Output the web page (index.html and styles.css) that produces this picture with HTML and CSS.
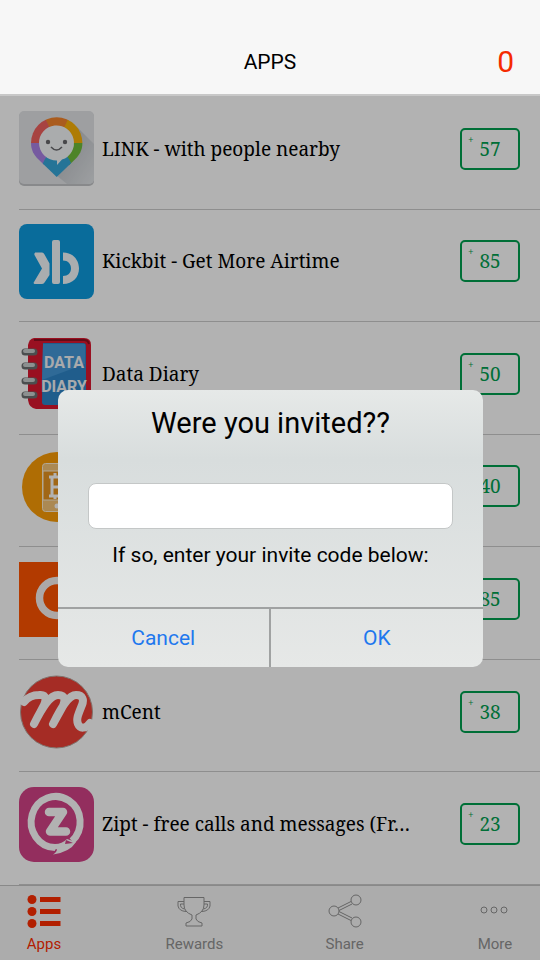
FILE: index.html
```html
<!DOCTYPE html>
<html lang="en">
<head>
  <title>Apps</title>
  <meta charset="utf-8">
  <meta name="viewport" content="width=device-width, initial-scale=1.0">
  <link rel="stylesheet" href="styles.css">
</head>
<body>
  <header class="header">
    <h1>APPS</h1>
    <span class="balance">0</span>
  </header>

  <div class="screen">
    <ul class="app-list">
      <li class="app">
        <svg class="app-icon" viewBox="0 0 75 75">
          <defs>
            <clipPath id="pin"><path d="M12 32a25.700 25.700 0 0 1 51.400 0c0 7-3 12-7 16L37.700 66 19 48c-4-4-7-9-7-16z"/></clipPath>
            <linearGradient id="tile-shadow" x1="0" y1="0" x2="1" y2="1">
              <stop offset="0" stop-color="#b4b8bd"/><stop offset="1" stop-color="#e2e5e8"/>
            </linearGradient>
          </defs>
          <rect y="1" width="75" height="74" rx="5" fill="#c3c5c8"/>
          <rect width="75" height="73" rx="5" fill="#e2e4e7"/>
          <path d="M57 15L75 33V68a5 5 0 0 1-5 5H48L37 64z" fill="url(#tile-shadow)"/>
          <g clip-path="url(#pin)">
            <path d="M38 32L24 5H52z" fill="#f4842c"/>
            <path d="M38 32L51 4H70V32z" fill="#f9b208"/>
            <path d="M38 32H70V50L60 80 48 49z" fill="#6fbe3a"/>
            <path d="M38 32L5 32V50L16 80 27 49z" fill="#a982e6"/>
            <path d="M38 32L50 48 62 72H14L26 48z" fill="#36a6d8"/>
            <path d="M38 32H5V5H25z" fill="#f0605e"/>
          </g>
          <path d="M20 32a17.500 17.500 0 1 1 23 16.600L38 54V49.500A17.500 17.500 0 0 1 20 32z" fill="#f4f6f8"/>
          <circle cx="29" cy="31" r="2.200" fill="#67686c"/>
          <circle cx="46" cy="31" r="2.200" fill="#67686c"/>
          <path d="M32 36q5.500 6 11 0" fill="none" stroke="#67686c" stroke-width="1.500"/>
        </svg>
        <span class="app-name">LINK - with people nearby</span>
        <button class="points"><sup>+</sup>57</button>
      </li>
      <li class="app">
        <svg class="app-icon" viewBox="0 0 75 75">
          <rect width="75" height="75" rx="8" fill="#0e9bdf"/>
          <rect x="33" y="16" width="8" height="44" rx="2" fill="#f4f8fb"/>
          <path d="M16 28.500h7q1.500 0 2.500 2l5 9V51l-5 7.500q-1 1.500-3 1.500H15.500q-1.500-.500-.500-2l8-13.500-7.500-13.500q-.500-2 .500-2z" fill="#f4f8fb"/>
          <path d="M44 28.500C54 28.500 60 36 60 44.500S54 60 44 60V52C49 52 52 49 52 44.500S49 36.500 44 36.500z" fill="#f4f8fb"/>
        </svg>
        <span class="app-name">Kickbit - Get More Airtime</span>
        <button class="points"><sup>+</sup>85</button>
      </li>
      <li class="app">
        <svg class="app-icon" viewBox="0 0 75 75">
          <path d="M15 2H65q7 0 7 7V67q0 6-7 6H17q-7-1-8-9V9q1-6 6-7z" fill="#dc1830"/>
          <path d="M15 4H65q4 0 5 4" fill="none" stroke="#8f1020" stroke-width="2"/>
          <path d="M24 7H64q3 0 3 3V66q0 3-3 3H26q-3 0-3-3z" fill="#2e86c9"/>
          <path d="M24 8H66V28L23 44z" fill="#4498d8"/>
          <g stroke-linecap="round" fill="none">
            <path d="M6 16H15M6 30H15M6 45H15M6 59H15" stroke="#6c7072" stroke-width="7"/>
            <path d="M6 15H14M6 29H14M6 44H14M6 58H14" stroke="#c9cecf" stroke-width="4"/>
          </g>
          <text class="diary-text" x="45" y="32" text-anchor="middle">DATA</text>
          <text class="diary-text" x="45" y="56" text-anchor="middle">DIARY</text>
        </svg>
        <span class="app-name">Data Diary</span>
        <button class="points"><sup>+</sup>50</button>
      </li>
      <li class="app">
        <svg class="app-icon" viewBox="0 0 75 75">
          <circle cx="38" cy="38" r="35" fill="#fb9d06"/>
          <rect x="23.500" y="14.500" width="29" height="48" rx="3" fill="#f5c478" stroke="#fff0d4"/>
          <path d="M24 22H52V51H24z" fill="#e79420" stroke="#fff0d4"/>
          <path d="M30 28H40q5 0 5 5t-5 5H33M40 38q6 0 6 4.500T40 47H30M33 28V47M36 24V28M41 24V28M36 47V50M41 47V50" fill="none" stroke="#fff" stroke-width="3"/>
          <circle cx="38" cy="57" r="2.500" fill="#fff"/>
        </svg>
        <span class="app-name"></span>
        <button class="points"><sup>+</sup>40</button>
      </li>
      <li class="app">
        <svg class="app-icon" viewBox="0 0 75 75">
          <rect width="75" height="75" fill="#ff5400"/>
          <circle cx="38" cy="36" r="17.500" fill="none" stroke="#f6f1ef" stroke-width="7.500"/>
        </svg>
        <span class="app-name"></span>
        <button class="points"><sup>+</sup>85</button>
      </li>
      <li class="app">
        <svg class="app-icon" viewBox="0 0 75 75">
          <circle cx="37.500" cy="38" r="36" fill="#ed4036" stroke="#b9a49c"/>
          <path d="M5 28C9 23 14 21 20 21C28 20 27 27 25 31L15 50C24 32 31 21 39 21C47 21 46 27 44 32L34 50C43 32 50 21 57 21C64 21 65 26 63 31C59 41 57 45 59 50C61 55 67 55 71 49" fill="none" stroke="#fff" stroke-width="8" stroke-linecap="round" stroke-linejoin="round"/>
        </svg>
        <span class="app-name">mCent</span>
        <button class="points"><sup>+</sup>38</button>
      </li>
      <li class="app">
        <svg class="app-icon" viewBox="0 0 75 75">
          <rect width="75" height="75" rx="15" fill="#d34287"/>
          <path d="M53 54A24.500 25.500 0 1 0 36 60.500" fill="none" stroke="#fff" stroke-width="7"/>
          <path d="M48 52L57 55Q51 65 34 67.500 38 65 38 62 34 64 29 62 31 58 36 57 43 57 48 52z" fill="#fff"/>
          <path d="M47 53L54 56 46 57" fill="#d34287"/>
          <path d="M30 25H44L31 44.500H47" fill="none" stroke="#fff" stroke-width="8.500" stroke-linecap="round" stroke-linejoin="round"/>
        </svg>
        <span class="app-name">Zipt - free calls and messages (Fr…</span>
        <button class="points"><sup>+</sup>23</button>
      </li>
    </ul>

    <nav class="tabs">
      <a class="tab active" href="#apps">
        <svg class="tab-icon" viewBox="0 0 36 36" fill="currentColor">
          <circle cx="6" cy="6.500" r="4.500"/><circle cx="6" cy="18.500" r="4.500"/><circle cx="6" cy="30.500" r="4.500"/>
          <path d="M14 4H34.500V9H14zM14 16H34.500V21H14zM14 28H34.500V33H14z"/>
        </svg>
        Apps
      </a>
      <a class="tab" href="#rewards">
        <svg class="tab-icon" viewBox="0 0 36 36" fill="none" stroke="currentColor">
          <path d="M8 4.500H28V12Q28 19 20 22V26Q21 29 26 30V33H10V30Q15 29 16 26V22Q8 19 8 12z"/>
          <path d="M8 8.500H2V13Q3 18 10 18.500M8 11H4.500Q4 15 8.500 16M28 8.500H34V13Q33 18 26 18.500M28 11H31.500Q32 15 27.500 16"/>
        </svg>
        Rewards
      </a>
      <a class="tab" href="#share">
        <svg class="tab-icon" viewBox="0 0 36 36" fill="none" stroke="currentColor">
          <circle cx="7" cy="18" r="5"/><circle cx="29" cy="7" r="5"/><circle cx="29" cy="29" r="5"/>
          <path d="M11 15L24 8.500M12 17.500L25 11M11 21L24 27.500M12 18.500L25 25"/>
        </svg>
        Share
      </a>
      <a class="tab" href="#more">
        <svg class="tab-icon" viewBox="0 0 36 36" fill="none" stroke="currentColor">
          <circle cx="7" cy="17" r="3"/><circle cx="17" cy="17" r="3"/><circle cx="27" cy="17" r="3"/>
        </svg>
        More
      </a>
    </nav>

    <div class="overlay">
      <form class="dialog">
        <div class="dialog-body">
          <h2>Were you invited??</h2>
          <input class="code" id="code" type="text">
          <label for="code">If so, enter your invite code below:</label>
        </div>
        <div class="dialog-buttons">
          <button type="button">Cancel</button>
          <button type="button">OK</button>
        </div>
      </form>
    </div>
  </div>
</body>
</html>
```
FILE: styles.css
```css
* {box-sizing: border-box; margin: 0; padding: 0;}
body {display: flex; flex-direction: column; min-height: 100vh; background: #fff; font-family: Roboto, sans-serif; color: #000;}
button, input {font: inherit; color: inherit; background: none; border: 0;}

.header {display: grid; grid-template-columns: 1fr auto 1fr; align-items: center; height: 96px; padding: 30px 26px 0; background: #f7f7f7; border-bottom: 2px solid #c8c8c8;}
.header h1 {grid-column: 2; font-size: 21px; font-weight: 400;}
.balance {justify-self: end; font-size: 30px; line-height: 32px; color: #f52a00;}

.screen {position: relative; flex: 1; display: flex; flex-direction: column; padding-top: 1px;}

.app-list {flex: 1; display: grid; grid-auto-rows: 1fr; padding-left: 19px; list-style: none;}
.app {display: flex; align-items: center; gap: 8px; padding: 14px 20px 22px 0; border-bottom: 1px solid #ccc; font-family: "Noto Serif", "DejaVu Serif Condensed", "DejaVu Serif", serif; font-size: 19px;}
.app-icon {flex: none; width: 75px; height: 75px;}
.app-name {flex: 1; white-space: nowrap;}
.points {position: relative; width: 60px; height: 42px; border: 2px solid #00a050; border-radius: 5px; color: #00a050;}
.points sup {position: absolute; top: 4px; left: 6px; font-size: 10px; line-height: 12px;}
.diary-text {font-family: Roboto, sans-serif; font-size: 16px; font-weight: 700; fill: #f2f4f6;}

.tabs {display: flex; justify-content: space-between; height: 75px; padding: 7px 13px 0 12px; background: #f7f7f7; border-top: 1px solid #c4c4c4;}
.tab {display: flex; flex-direction: column; align-items: center; gap: 5px; width: 64px; font-size: 15px; line-height: 20px; color: #929292; text-decoration: none;}
.tab.active {color: #ff2d00;}
.tab-icon {width: 36px; height: 36px;}

.overlay {position: absolute; inset: 0; display: grid; align-items: center; padding: 0 57px 0 58px; background: rgba(0, 0, 0, .3);}
.dialog {overflow: hidden; border-radius: 10px; background: linear-gradient(#e6e9e8, #d8dddd 25%, #e6e8e7);}
.dialog-body {display: flex; flex-direction: column; align-items: center; padding: 16px 30px 38px; border-bottom: 2px solid #a0a2a2;}
.dialog h2 {font-size: 29px; font-weight: 400; line-height: 34px;}
.code {width: 100%; height: 46px; margin: 43px 0 12px; padding: 0 10px; background: #fff; border: 1px solid #c4c7c7; border-radius: 8px; font-size: 20px;}
.dialog label {font-size: 21px; line-height: 28px;}
.dialog-buttons {display: grid; grid-template-columns: 1fr 1fr;}
.dialog-buttons button {height: 58px; font-size: 21px; color: #1f78ee;}
.dialog-buttons button:first-child {border-right: 2px solid #a0a2a2;}
```
